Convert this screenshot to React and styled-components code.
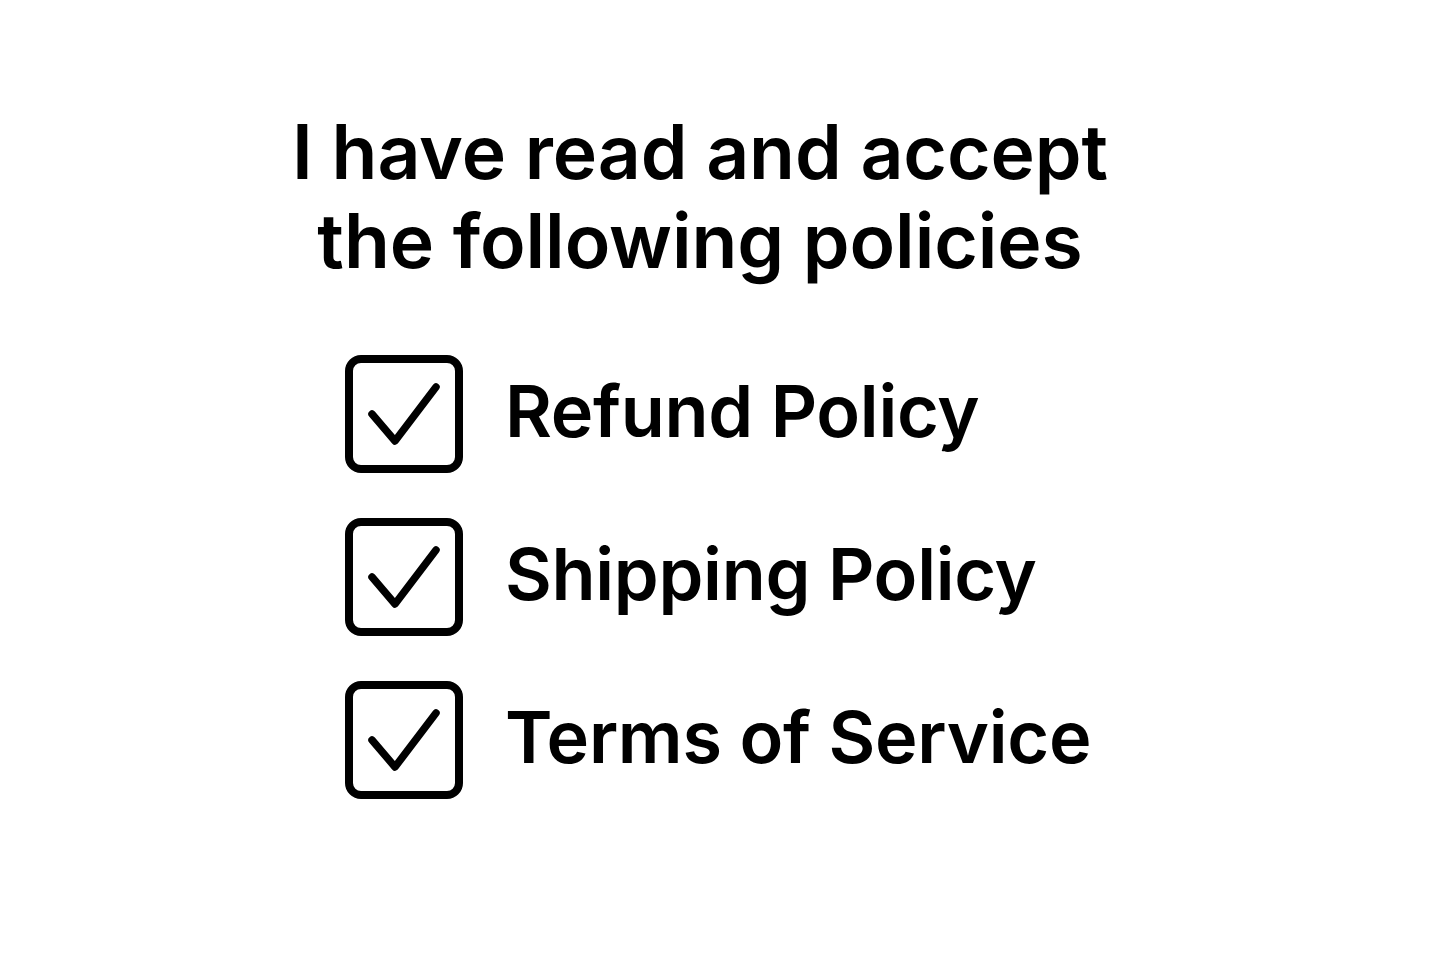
import React from 'react';
import styled, { createGlobalStyle } from 'styled-components';

const GlobalStyle = createGlobalStyle`
    html, body {
        margin: 0;
        padding: 0;
        background: #ffffff;
    }
    body {
        font-family: Inter, "Noto Sans", "Liberation Sans", sans-serif;
        color: #000;
    }
`

const Page = styled.div`
    width: 1445px;
    height: 963px;
    box-sizing: border-box;
    display: flex;
    flex-direction: column;
    align-items: center;
    padding: 107px 45px 0 0;
`
const Heading = styled.h1`
    margin: 0;
    font-size: 75px;
    line-height: 89px;
    font-weight: 600;
    letter-spacing: -0.1px;
    text-align: center;
`
const List = styled.ul`
    list-style: none;
    margin: 70px 0 0 345px;
    padding: 0;
    align-self: flex-start;
    display: flex;
    flex-direction: column;
    gap: 45px;
`
const Row = styled.li`
    display: flex;
    align-items: center;
    gap: 42px;
`
const Box = styled.svg`
    width: 118px;
    height: 118px;
    flex-shrink: 0;
`
const Label = styled.span`
    font-size: 72px;
    font-weight: 600;
    line-height: 1;
    letter-spacing: -0.3px;
    margin-top: -6px;
`

const CheckBox = () => (
    <Box viewBox="0 0 118 118">
        <rect x="4" y="4" width="110" height="110" rx="12" fill="none" stroke="#000" strokeWidth="8" />
        <path d="M27 59 L50 86 L91 32" fill="none" stroke="#000" strokeWidth="7.5" strokeLinecap="round" strokeLinejoin="round" />
    </Box>
)

const policies = ['Refund Policy', 'Shipping Policy', 'Terms of Service']

const App = () => {
    return (
        <Page>
            <GlobalStyle />
            <Heading>I have read and accept<br />the following policies</Heading>
            <List>
                {policies.map(p => (
                    <Row key={p}>
                        <CheckBox />
                        <Label>{p}</Label>
                    </Row>
                ))}
            </List>
        </Page>
    );
};

export default App;
